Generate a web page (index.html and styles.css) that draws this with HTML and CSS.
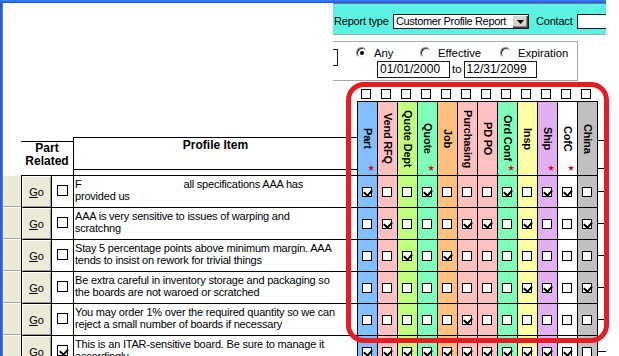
FILE: index.html
```html
<!DOCTYPE html>
<html>
<head>
<meta charset="utf-8">
<title>Customer Profile Report</title>
<link rel="stylesheet" href="styles.css">
</head>
<body>
<div class="screen">
  <div class="titlebar"></div>
  <div class="window">
    <div class="inner">
      <div class="toolbar-row">
        <div class="blank"></div>
        <div class="toolbar">
          <span class="lbl lbl-report">Report type</span>
          <div class="combo">
            <span class="combo-text">Customer Profile Report</span>
            <span class="drop"><svg width="7" height="4" viewBox="0 0 7 4"><polygon points="0,0 7,0 3.5,4" fill="#000"/></svg></span>
          </div>
          <span class="lbl lbl-contact">Contact</span>
          <div class="field contact"></div>
        </div>
      </div>

      <div class="filter-row">
        <div class="blank"></div>
        <div class="filter">
          <div class="stub"></div>
          <div class="filter-body">
            <div class="radios">
              <span class="opt opt-any"><span class="radio on"></span>Any</span>
              <span class="opt opt-eff"><span class="radio"></span>Effective</span>
              <span class="opt"><span class="radio"></span>Expiration</span>
            </div>
            <div class="dates">
              <span class="field date">01/01/2000</span>
              <span class="to">to</span>
              <span class="field date">12/31/2099</span>
            </div>
          </div>
        </div>
      </div>

      <div class="head-row">
        <div class="h-side"></div>
        <div class="h-part">Part<br>Related</div>
        <div class="h-item"><div class="h-item-box">Profile Item</div></div>
        <div class="h-grid">
          <div class="flags top-cbs">
            <span class="slot"><i class="cb"></i></span><span class="slot"><i class="cb"></i></span><span class="slot"><i class="cb"></i></span><span class="slot"><i class="cb"></i></span><span class="slot"><i class="cb"></i></span><span class="slot"><i class="cb"></i></span><span class="slot"><i class="cb"></i></span><span class="slot"><i class="cb"></i></span><span class="slot"><i class="cb"></i></span><span class="slot"><i class="cb"></i></span><span class="slot"><i class="cb"></i></span><span class="slot"><i class="cb"></i></span>
          </div>
          <div class="flags heads">
            <span class="hd"><span class="vt">Part</span><svg class="star" width="6" height="6" viewBox="0 0 6 6"><polygon points="3,0 3.7,2.1 6,2.2 4.2,3.6 4.9,5.8 3,4.5 1.1,5.8 1.8,3.6 0,2.2 2.3,2.1"/></svg></span>
            <span class="hd"><span class="vt">Vend RFQ</span></span>
            <span class="hd"><span class="vt">Quote Dept</span></span>
            <span class="hd"><span class="vt">Quote</span><svg class="star" width="6" height="6" viewBox="0 0 6 6"><polygon points="3,0 3.7,2.1 6,2.2 4.2,3.6 4.9,5.8 3,4.5 1.1,5.8 1.8,3.6 0,2.2 2.3,2.1"/></svg></span>
            <span class="hd"><span class="vt">Job</span></span>
            <span class="hd"><span class="vt">Purchasing</span></span>
            <span class="hd"><span class="vt">PD PO</span></span>
            <span class="hd"><span class="vt">Ord Conf</span><svg class="star" width="6" height="6" viewBox="0 0 6 6"><polygon points="3,0 3.7,2.1 6,2.2 4.2,3.6 4.9,5.8 3,4.5 1.1,5.8 1.8,3.6 0,2.2 2.3,2.1"/></svg></span>
            <span class="hd"><span class="vt">Insp</span></span>
            <span class="hd"><span class="vt">Ship</span><svg class="star" width="6" height="6" viewBox="0 0 6 6"><polygon points="3,0 3.7,2.1 6,2.2 4.2,3.6 4.9,5.8 3,4.5 1.1,5.8 1.8,3.6 0,2.2 2.3,2.1"/></svg></span>
            <span class="hd"><span class="vt">CofC</span><svg class="star" width="6" height="6" viewBox="0 0 6 6"><polygon points="3,0 3.7,2.1 6,2.2 4.2,3.6 4.9,5.8 3,4.5 1.1,5.8 1.8,3.6 0,2.2 2.3,2.1"/></svg></span>
            <span class="hd"><span class="vt">China</span></span>
          </div>
        </div>
        <div class="h-tail"><div class="h-tail-box"></div></div>
      </div>

      <div class="rows">
        <div class="row">
          <span class="side"></span>
          <span class="go-cell"><span class="go"><u>G</u>o</span></span>
          <span class="pr-cell"><i class="cb lg"></i></span>
          <span class="txt">F<span class="redact"></span>all specifications AAA has<br>provided us</span>
          <span class="flags"><span class="f"><i class="cb on"></i></span><span class="f"><i class="cb"></i></span><span class="f"><i class="cb"></i></span><span class="f"><i class="cb on"></i></span><span class="f"><i class="cb"></i></span><span class="f"><i class="cb"></i></span><span class="f"><i class="cb"></i></span><span class="f"><i class="cb on"></i></span><span class="f"><i class="cb"></i></span><span class="f"><i class="cb on"></i></span><span class="f"><i class="cb on"></i></span><span class="f"><i class="cb"></i></span></span>
          <span class="tail"></span>
        </div>
        <div class="row">
          <span class="side"></span>
          <span class="go-cell"><span class="go"><u>G</u>o</span></span>
          <span class="pr-cell"><i class="cb lg"></i></span>
          <span class="txt">AAA is very sensitive to issues of warping and<br>scratchng</span>
          <span class="flags"><span class="f"><i class="cb"></i></span><span class="f"><i class="cb on"></i></span><span class="f"><i class="cb"></i></span><span class="f"><i class="cb"></i></span><span class="f"><i class="cb"></i></span><span class="f"><i class="cb on"></i></span><span class="f"><i class="cb on"></i></span><span class="f"><i class="cb"></i></span><span class="f"><i class="cb on"></i></span><span class="f"><i class="cb"></i></span><span class="f"><i class="cb"></i></span><span class="f"><i class="cb on"></i></span></span>
          <span class="tail"></span>
        </div>
        <div class="row">
          <span class="side"></span>
          <span class="go-cell"><span class="go"><u>G</u>o</span></span>
          <span class="pr-cell"><i class="cb lg"></i></span>
          <span class="txt">Stay 5 percentage points above minimum margin. AAA<br>tends to insist on rework for trivial things</span>
          <span class="flags"><span class="f"><i class="cb"></i></span><span class="f"><i class="cb"></i></span><span class="f"><i class="cb on"></i></span><span class="f"><i class="cb"></i></span><span class="f"><i class="cb on"></i></span><span class="f"><i class="cb"></i></span><span class="f"><i class="cb"></i></span><span class="f"><i class="cb"></i></span><span class="f"><i class="cb"></i></span><span class="f"><i class="cb"></i></span><span class="f"><i class="cb"></i></span><span class="f"><i class="cb"></i></span></span>
          <span class="tail"></span>
        </div>
        <div class="row">
          <span class="side"></span>
          <span class="go-cell"><span class="go"><u>G</u>o</span></span>
          <span class="pr-cell"><i class="cb lg"></i></span>
          <span class="txt">Be extra careful in inventory storage and packaging so<br>the boards are not waroed or scratched</span>
          <span class="flags"><span class="f"><i class="cb"></i></span><span class="f"><i class="cb"></i></span><span class="f"><i class="cb"></i></span><span class="f"><i class="cb"></i></span><span class="f"><i class="cb"></i></span><span class="f"><i class="cb"></i></span><span class="f"><i class="cb"></i></span><span class="f"><i class="cb"></i></span><span class="f"><i class="cb on"></i></span><span class="f"><i class="cb on"></i></span><span class="f"><i class="cb"></i></span><span class="f"><i class="cb on"></i></span></span>
          <span class="tail"></span>
        </div>
        <div class="row">
          <span class="side"></span>
          <span class="go-cell"><span class="go"><u>G</u>o</span></span>
          <span class="pr-cell"><i class="cb lg"></i></span>
          <span class="txt">You may order 1% over the required quantity so we can<br>reject a small number of boards if necessary</span>
          <span class="flags"><span class="f"><i class="cb"></i></span><span class="f"><i class="cb"></i></span><span class="f"><i class="cb"></i></span><span class="f"><i class="cb"></i></span><span class="f"><i class="cb"></i></span><span class="f"><i class="cb on"></i></span><span class="f"><i class="cb"></i></span><span class="f"><i class="cb"></i></span><span class="f"><i class="cb"></i></span><span class="f"><i class="cb"></i></span><span class="f"><i class="cb"></i></span><span class="f"><i class="cb"></i></span></span>
          <span class="tail"></span>
        </div>
        <div class="row">
          <span class="side"></span>
          <span class="go-cell"><span class="go"><u>G</u>o</span></span>
          <span class="pr-cell"><i class="cb lg on"></i></span>
          <span class="txt">This is an ITAR-sensitive board. Be sure to manage it<br>accordingly</span>
          <span class="flags"><span class="f"><i class="cb on"></i></span><span class="f"><i class="cb on"></i></span><span class="f"><i class="cb on"></i></span><span class="f"><i class="cb on"></i></span><span class="f"><i class="cb on"></i></span><span class="f"><i class="cb on"></i></span><span class="f"><i class="cb on"></i></span><span class="f"><i class="cb on"></i></span><span class="f"><i class="cb on"></i></span><span class="f"><i class="cb on"></i></span><span class="f"><i class="cb on"></i></span><span class="f"><i class="cb"></i></span></span>
          <span class="tail"></span>
        </div>
      </div>
    </div>
  </div>
  <div class="highlight"></div>
</div>
</body>
</html>
```

FILE: styles.css
```css
* { box-sizing: border-box; }
html, body { margin: 0; padding: 0; background: #fff; }
body { font-family: "Liberation Sans", Arial, sans-serif; font-size: 11px; color: #000; }

.screen { position: relative; width: 619px; height: 356px; overflow: hidden; background: #fff; }
.titlebar { width: 606px; height: 3px; background: linear-gradient(#3f80f6, #1459e6); }
.window { width: 606px; height: 353px; border-left: 2px solid #2062e4; }
.inner { height: 100%; border-left: 1px solid #7c7c7c; }

/* toolbar */
.toolbar-row { display: flex; height: 32px; }
.blank { width: 330px; flex: none; }
.toolbar { flex: 1; display: flex; align-items: flex-start; padding: 10px 0 0 1px; background: #5af3e3; border-top: 1px solid #7a7a7a; border-bottom: 1px solid #a8a8a8; overflow: hidden; }
.lbl { line-height: 15px; white-space: nowrap; letter-spacing: -0.2px; flex: none; }
.lbl-report { width: 59px; }
.lbl-contact { width: 41px; margin-left: 7px; }
.combo { width: 136px; height: 15px; flex: none; border: 1px solid #1a1a1a; background: #fff; display: flex; justify-content: space-between; }
.combo-text { line-height: 13px; padding-left: 2px; letter-spacing: -0.35px; white-space: nowrap; }
.drop { width: 16px; height: 13px; background: #d8d4cc; box-shadow: inset 1px 1px #fff, inset -1px -1px #404040, inset -2px -2px #8a8a8a; display: flex; align-items: center; justify-content: center; }
.field { display: block; height: 15px; border: 1px solid #1a1a1a; background: #fff; }
.contact { width: 40px; flex: none; }

/* filter panel */
.filter-row { display: flex; height: 46px; }
.filter { width: 245px; height: 40px; margin-top: 6px; border: 1px solid #a7a7a7; border-left: 0; display: flex; }
.stub { width: 5px; height: 17px; margin-top: 7px; border: 1px solid #1a1a1a; border-left: 0; flex: none; }
.filter-body { display: flex; flex-direction: column; }
.radios { display: flex; margin: 5px 0 0 18px; height: 13px; }
.opt { display: flex; align-items: flex-start; line-height: 13px; white-space: nowrap; font-size: 11.3px; }
.opt-any { width: 64px; }
.opt-eff { width: 80px; }
.radio { position: relative; width: 11px; height: 11px; margin-right: 7px; border-radius: 50%; background: #fff; border: 1px solid; border-color: #8a8a8a #f2f2f2 #f2f2f2 #8a8a8a; box-shadow: inset 1px 1px 0 #303030; }
.radio.on::after { content: ""; position: absolute; left: 3px; top: 3px; width: 4px; height: 4px; border-radius: 50%; background: #000; }
.dates { display: flex; margin: 1px 0 0 39px; }
.date { width: 73px; height: 17px; font-size: 12px; line-height: 15px; padding-left: 2px; }
.to { margin: 0 2px; line-height: 17px; font-size: 11.5px; }

/* header */
.head-row { display: flex; height: 94px; }
.h-side { width: 18px; flex: none; }
.h-part { width: 52px; height: 34px; flex: none; align-self: flex-end; border-top: 1px solid #000; font-weight: bold; font-size: 12px; line-height: 12.5px; text-align: center; }
.h-item { width: 284px; height: 38px; flex: none; align-self: flex-end; border-left: 1px solid #000; }
.h-item-box { height: 33px; border-top: 1px solid #000; border-bottom: 1px solid #000; font-weight: bold; font-size: 12px; line-height: 14px; text-align: center; }
.h-grid { width: 240px; flex: none; }
.flags { display: flex; flex: none; }
.top-cbs { height: 20px; }
.slot { width: 20px; padding: 8px 0 0 4px; }
.heads { height: 74px; }
.hd { position: relative; width: 20px; height: 74px; border-left: 1px solid #000; border-top: 1px solid #000; display: flex; align-items: center; justify-content: center; }
.vt { writing-mode: vertical-rl; white-space: nowrap; font-weight: bold; font-size: 11px; letter-spacing: -0.2px; line-height: 12px; }
.star { position: absolute; left: 10px; top: 63px; fill: #e80000; }
.h-tail { width: 9px; flex: none; padding-top: 20px; }
.h-tail > .h-tail-box { height: 74px; border-left: 1px solid #000; }
.h-tail-box { background: linear-gradient(#000, #000) no-repeat 0 39px / 100% 1px, linear-gradient(#000, #000) no-repeat 0 67px / 100% 1px; }

/* column colours */
.flags > :nth-child(1)  { background-color: #80c0ff; }
.flags > :nth-child(2)  { background-color: #ffc0c0; }
.flags > :nth-child(3)  { background-color: #c0ff80; }
.flags > :nth-child(4)  { background-color: #80ffb8; }
.flags > :nth-child(5)  { background-color: #ffc080; }
.flags > :nth-child(6)  { background-color: #ffc0c0; }
.flags > :nth-child(7)  { background-color: #ffc0c0; }
.flags > :nth-child(8)  { background-color: #80ffb8; }
.flags > :nth-child(9)  { background-color: #ffffa8; }
.flags > :nth-child(10) { background-color: #e0b0f0; }
.flags > :nth-child(11) { background-color: #ffffff; }
.flags > :nth-child(12) { background-color: #c0c0c0; }
.top-cbs > .slot { background-color: transparent; }

/* checkboxes */
.cb { position: relative; display: block; width: 10px; height: 10px; border: 1px solid #000; background: #fff; }
.cb.lg { width: 11px; height: 11px; }
.cb.on::after { content: ""; position: absolute; left: 2px; top: 0; width: 4px; height: 6px; border: solid #000; border-width: 0 2px 2px 0; transform: rotate(42deg); }
.cb.lg.on::after { left: 2.5px; top: 0.5px; }

/* data rows */
.row { display: flex; height: 32px; }
.side { width: 18px; flex: none; background: #ece9d8; box-shadow: inset 0 1px #fff, inset 0 -1px #aca899; }
.go-cell { width: 30px; flex: none; border-left: 1px solid #000; border-top: 1px solid #000; display: flex; }
.go { flex: 1; display: flex; align-items: center; justify-content: center; background: #ece9d8; box-shadow: inset 1px 1px #fff, inset -1px -1px #9d9a8c; }
.pr-cell { width: 22px; flex: none; border-left: 1px solid #000; border-top: 1px solid #000; padding: 9px 0 0 5px; }
.txt { width: 284px; flex: none; border-left: 1px solid #000; border-top: 1px solid #000; padding: 2px 0 0 1px; line-height: 12px; letter-spacing: -0.2px; white-space: nowrap; overflow: hidden; }
.redact { display: inline-block; width: 102px; }
.f { width: 20px; height: 32px; border-left: 1px solid #000; border-top: 1px solid #000; padding: 11px 0 0 4px; }
.tail { width: 9px; flex: none; border-left: 1px solid #000; background: linear-gradient(#000, #000) no-repeat 0 16px / 100% 1px; }

/* annotation highlight drawn over the grid */
.highlight { position: absolute; left: 346px; top: 82px; width: 263px; height: 261px; border: 5px solid #e41c24; border-radius: 18px; }
```
